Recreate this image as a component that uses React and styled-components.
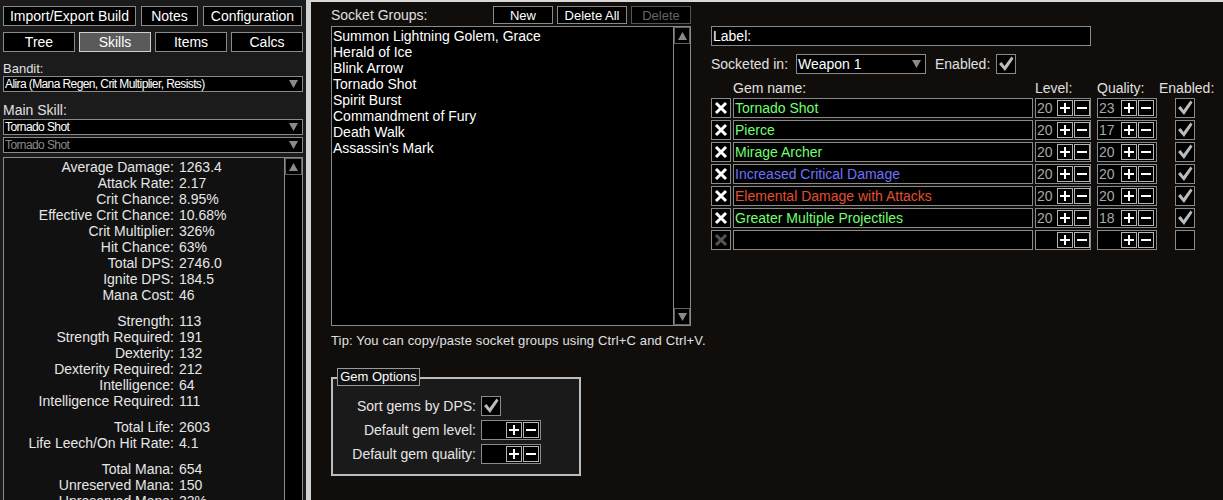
import React from "react";
import styled, { createGlobalStyle } from "styled-components";

const stats = [
  [
    ["Average Damage", "1263.4"],
    ["Attack Rate", "2.17"],
    ["Crit Chance", "8.95%"],
    ["Effective Crit Chance", "10.68%"],
    ["Crit Multiplier", "326%"],
    ["Hit Chance", "63%"],
    ["Total DPS", "2746.0"],
    ["Ignite DPS", "184.5"],
    ["Mana Cost", "46"],
  ],
  [
    ["Strength", "113"],
    ["Strength Required", "191"],
    ["Dexterity", "132"],
    ["Dexterity Required", "212"],
    ["Intelligence", "64"],
    ["Intelligence Required", "111"],
  ],
  [
    ["Total Life", "2603"],
    ["Life Leech/On Hit Rate", "4.1"],
  ],
  [
    ["Total Mana", "654"],
    ["Unreserved Mana", "150"],
    ["Unreserved Mana", "33%"],
  ],
];

const socketGroups = [
  "Summon Lightning Golem, Grace",
  "Herald of Ice",
  "Blink Arrow",
  "Tornado Shot",
  "Spirit Burst",
  "Commandment of Fury",
  "Death Walk",
  "Assassin's Mark",
];

const STR = "#e05030";
const DEX = "#70ff70";
const INT = "#7070ff";

const gems = [
  { name: "Tornado Shot", color: DEX, level: "20", quality: "23" },
  { name: "Pierce", color: DEX, level: "20", quality: "17" },
  { name: "Mirage Archer", color: DEX, level: "20", quality: "20" },
  { name: "Increased Critical Damage", color: INT, level: "20", quality: "20" },
  { name: "Elemental Damage with Attacks", color: STR, level: "20", quality: "20" },
  { name: "Greater Multiple Projectiles", color: DEX, level: "20", quality: "18" },
];

const GlobalStyle = createGlobalStyle`
  html, body {
    margin: 0;
    padding: 0;
    background: #100d0b;
  }
  body {
    font-family: "Liberation Sans", Arial, sans-serif;
    color: #e8e8e8;
  }
  * {
    box-sizing: border-box;
  }
`;

const Page = styled.div`
  display: flex;
  width: 1223px;
  height: 500px;
  overflow: hidden;
`;

const Sidebar = styled.div`
  flex: none;
  width: 306px;
  height: 500px;
  padding: 6px 3px 0 3px;
  background: #1b1b1b;
  display: flex;
  flex-direction: column;
`;

const Divider = styled.div`
  flex: none;
  width: 5px;
  background: #d2d2d2;
`;

const Main = styled.div`
  flex: 1;
  border-top: 2px solid #d8d8d8;
  background: #100d0b;
  padding: 4px 0 0 20px;
  display: flex;
  gap: 20px;
`;

const ButtonRow = styled.div`
  display: flex;
  gap: ${(p) => p.$gap}px;
  margin-top: ${(p) => p.$mt || 0}px;
`;

const Btn = styled.div`
  width: ${(p) => p.$w}px;
  height: ${(p) => p.$h || 20}px;
  border: 1px solid ${(p) => (p.$active ? "#d0d0d0" : p.$disabled ? "#555" : "#8a8a8a")};
  background: ${(p) => (p.$active ? "#5a5a5a" : "#000")};
  color: ${(p) => (p.$disabled ? "#666" : "#fff")};
  font-size: ${(p) => p.$fs || 14}px;
  display: flex;
  align-items: center;
  justify-content: center;
  white-space: nowrap;
`;

const FieldLabel = styled.div`
  margin-top: ${(p) => p.$mt}px;
  height: ${(p) => p.$h}px;
  line-height: ${(p) => p.$h}px;
  font-size: ${(p) => p.$fs}px;
  color: #e0e0e0;
`;

const Select = styled.div`
  width: ${(p) => (p.$w ? `${p.$w}px` : "100%")};
  height: ${(p) => p.$h}px;
  margin-top: ${(p) => p.$mt || 0}px;
  border: 1px solid #8a8a8a;
  background: #000;
  color: ${(p) => (p.$disabled ? "#8a8a8a" : "#fff")};
  font-size: ${(p) => p.$fs}px;
  letter-spacing: ${(p) => p.$ls || 0}px;
  display: flex;
  align-items: center;
  justify-content: space-between;
  padding: 0 4px 0 1px;
  white-space: nowrap;
`;

const StatsBox = styled.div`
  flex: 1;
  min-height: 0;
  margin-top: 4px;
  display: flex;
  border: 1px solid #8a8a8a;
  border-bottom: none;
  background: #111;
  overflow: hidden;
`;

const StatsList = styled.div`
  flex: 1;
  padding-top: 1px;
`;

const StatGroup = styled.div`
  & + & {
    margin-top: 10px;
  }
`;

const StatRow = styled.div`
  display: flex;
  height: 16px;
  line-height: 16px;
  font-size: 14px;
  white-space: nowrap;
`;

const StatLabel = styled.span`
  width: 170px;
  text-align: right;
  color: #e6e6e6;
`;

const StatValue = styled.span`
  margin-left: 5px;
  color: #e6e6e6;
`;

const Scrollbar = styled.div`
  flex: none;
  width: ${(p) => p.$w}px;
  border-left: 1px solid #8a8a8a;
  background: #000;
  display: flex;
  flex-direction: column;
  justify-content: space-between;
`;

const ScrollBtn = styled.div`
  height: 17px;
  border: 1px solid #606060;
  display: flex;
  align-items: center;
  justify-content: center;
`;

const LeftCol = styled.div`
  flex: none;
  width: 360px;
  display: flex;
  flex-direction: column;
`;

const GroupsHeader = styled.div`
  display: flex;
  align-items: center;
  height: 18px;
  font-size: 14px;
  color: #e0e0e0;
`;

const HeaderButtons = styled.div`
  margin-left: auto;
  display: flex;
  gap: 4px;
`;

const ListBox = styled.div`
  margin-top: 2px;
  height: 300px;
  border: 1px solid #8a8a8a;
  background: #000;
  display: flex;
`;

const ListItems = styled.div`
  flex: 1;
  padding: 1px 0 0 1px;
`;

const ListItem = styled.div`
  height: 16px;
  line-height: 16px;
  font-size: 14px;
  color: #fff;
  white-space: nowrap;
`;

const Tip = styled.div`
  margin-top: 7px;
  height: 16px;
  line-height: 16px;
  font-size: 13px;
  letter-spacing: 0.15px;
  color: #e0e0e0;
  white-space: nowrap;
`;

const OptionsBox = styled.div`
  position: relative;
  margin-top: 28px;
  width: 250px;
  height: 99px;
  border: 2px solid #bdbdbd;
  background: #1a1a1a;
  padding-top: 17px;
`;

const OptionsLegend = styled.div`
  position: absolute;
  top: -11px;
  left: 4px;
  width: 83px;
  height: 18px;
  border: 1px solid #9a9a9a;
  background: #111;
  font-size: 13px;
  line-height: 16px;
  text-align: center;
  white-space: nowrap;
  color: #fff;
`;

const OptionsGrid = styled.div`
  display: grid;
  grid-template-columns: 143px auto;
  column-gap: 5px;
  row-gap: 4px;
  align-items: center;
`;

const OptionLabel = styled.div`
  text-align: right;
  font-size: 14px;
  color: #e6e6e6;
  white-space: nowrap;
`;

const RightCol = styled.div`
  flex: 1;
  padding-top: 20px;
  display: flex;
  flex-direction: column;
`;

const TextInput = styled.div`
  width: ${(p) => p.$w}px;
  height: 20px;
  margin-left: ${(p) => p.$ml || 0}px;
  border: 1px solid #8a8a8a;
  background: #000;
  font-size: 14px;
  line-height: 18px;
  padding-left: 1px;
  color: ${(p) => p.$color || "#fff"};
  white-space: nowrap;
  overflow: hidden;
`;

const InlineRow = styled.div`
  display: flex;
  align-items: center;
  height: ${(p) => p.$h || 20}px;
  margin-top: ${(p) => p.$mt || 0}px;
`;

const InlineText = styled.span`
  margin-left: ${(p) => p.$ml || 0}px;
  width: ${(p) => (p.$w ? `${p.$w}px` : "auto")};
  font-size: 14px;
  color: #e0e0e0;
  white-space: nowrap;
  flex: none;
`;

const Box = styled.div`
  flex: none;
  width: 20px;
  height: 20px;
  margin-left: ${(p) => p.$ml || 0}px;
  border: 1px solid #8a8a8a;
  background: #000;
  display: flex;
  align-items: center;
  justify-content: center;
`;

const SpinnerWrap = styled.div`
  flex: none;
  width: ${(p) => p.$w}px;
  height: 20px;
  margin-left: ${(p) => p.$ml || 0}px;
  border: 1px solid #8a8a8a;
  background: #000;
  display: flex;
  align-items: center;
  padding-right: ${(p) => p.$pr || 0}px;
`;

const SpinnerValue = styled.span`
  flex: 1;
  padding-left: 1px;
  font-size: 14px;
  color: #a8a8a8;
`;

const SpinBtn = styled.div`
  width: 16px;
  height: 16px;
  border: 1px solid #b4b4b4;
  background: #000;
  display: flex;
  align-items: center;
  justify-content: center;
  & + & {
    margin-left: 1px;
  }
`;

const DownTri = () => (
  <svg width="9" height="8" viewBox="0 0 9 8">
    <polygon points="0,0 9,0 4.5,8" fill="#8a8a8a" />
  </svg>
);

const UpTri = () => (
  <svg width="9" height="8" viewBox="0 0 9 8">
    <polygon points="0,8 9,8 4.5,0" fill="#8a8a8a" />
  </svg>
);

const Check = () => (
  <svg width="18" height="18" viewBox="0 0 18 18">
    <polygon points="2,9 4.5,7 7.5,11 14.5,1.5 16.5,3.5 8,16" fill="#bcbcbc" />
  </svg>
);

const Cross = ({ disabled }) => (
  <svg width="14" height="14" viewBox="0 0 14 14">
    <path d="M2 2 L12 12 M12 2 L2 12" stroke={disabled ? "#555" : "#fff"} strokeWidth="3" />
  </svg>
);

const Plus = () => (
  <svg width="12" height="12" viewBox="0 0 12 12">
    <path d="M1 6 H11 M6 1 V11" stroke="#fff" strokeWidth="2" />
  </svg>
);

const Minus = () => (
  <svg width="12" height="12" viewBox="0 0 12 12">
    <path d="M1 6 H11" stroke="#fff" strokeWidth="2" />
  </svg>
);

const Spinner = ({ w, ml, pr, value }) => (
  <SpinnerWrap $w={w} $ml={ml} $pr={pr}>
    <SpinnerValue>{value}</SpinnerValue>
    <SpinBtn>
      <Plus />
    </SpinBtn>
    <SpinBtn>
      <Minus />
    </SpinBtn>
  </SpinnerWrap>
);

const CheckBox = ({ checked, ml }) => <Box $ml={ml}>{checked && <Check />}</Box>;

const GemRow = ({ gem }) => (
  <InlineRow $mt={2}>
    <Box>
      <Cross disabled={!gem} />
    </Box>
    <TextInput $w={300} $ml={2} $color={gem && gem.color}>
      {gem && gem.name}
    </TextInput>
    <Spinner w={56} ml={2} pr={0} value={gem && gem.level} />
    <Spinner w={60} ml={6} pr={2} value={gem && gem.quality} />
    <CheckBox ml={18} checked={!!gem} />
  </InlineRow>
);

export default function App() {
  return (
    <>
      <GlobalStyle />
      <Page>
        <Sidebar>
          <ButtonRow $gap={5}>
            <Btn $w={133}>Import/Export Build</Btn>
            <Btn $w={57}>Notes</Btn>
            <Btn $w={99}>Configuration</Btn>
          </ButtonRow>
          <ButtonRow $gap={4} $mt={6}>
            <Btn $w={72}>Tree</Btn>
            <Btn $w={72} $active>
              Skills
            </Btn>
            <Btn $w={72}>Items</Btn>
            <Btn $w={72}>Calcs</Btn>
          </ButtonRow>
          <FieldLabel $mt={10} $h={14} $fs={13}>
            Bandit:
          </FieldLabel>
          <Select $h={16} $fs={12} $ls={-0.6}>
            <span>Alira (Mana Regen, Crit Multiplier, Resists)</span>
            <DownTri />
          </Select>
          <FieldLabel $mt={10} $h={17} $fs={14}>
            Main Skill:
          </FieldLabel>
          <Select $h={16} $fs={12} $ls={-0.6}>
            <span>Tornado Shot</span>
            <DownTri />
          </Select>
          <Select $h={16} $fs={12} $ls={-0.6} $mt={2} $disabled>
            <span>Tornado Shot</span>
            <DownTri />
          </Select>
          <StatsBox>
            <StatsList>
              {stats.map((group, gi) => (
                <StatGroup key={gi}>
                  {group.map(([label, value], i) => (
                    <StatRow key={i}>
                      <StatLabel>{label}:</StatLabel>
                      <StatValue>{value}</StatValue>
                    </StatRow>
                  ))}
                </StatGroup>
              ))}
            </StatsList>
            <Scrollbar $w={18}>
              <ScrollBtn>
                <UpTri />
              </ScrollBtn>
            </Scrollbar>
          </StatsBox>
        </Sidebar>
        <Divider />
        <Main>
          <LeftCol>
            <GroupsHeader>
              <span>Socket Groups:</span>
              <HeaderButtons>
                <Btn $w={60} $h={18} $fs={13}>
                  New
                </Btn>
                <Btn $w={70} $h={18} $fs={13}>
                  Delete All
                </Btn>
                <Btn $w={60} $h={18} $fs={13} $disabled>
                  Delete
                </Btn>
              </HeaderButtons>
            </GroupsHeader>
            <ListBox>
              <ListItems>
                {socketGroups.map((g) => (
                  <ListItem key={g}>{g}</ListItem>
                ))}
              </ListItems>
              <Scrollbar $w={17}>
                <ScrollBtn>
                  <UpTri />
                </ScrollBtn>
                <ScrollBtn>
                  <DownTri />
                </ScrollBtn>
              </Scrollbar>
            </ListBox>
            <Tip>Tip: You can copy/paste socket groups using Ctrl+C and Ctrl+V.</Tip>
            <OptionsBox>
              <OptionsLegend>Gem Options</OptionsLegend>
              <OptionsGrid>
                <OptionLabel>Sort gems by DPS:</OptionLabel>
                <CheckBox checked />
                <OptionLabel>Default gem level:</OptionLabel>
                <Spinner w={60} pr={1} />
                <OptionLabel>Default gem quality:</OptionLabel>
                <Spinner w={60} pr={1} />
              </OptionsGrid>
            </OptionsBox>
          </LeftCol>
          <RightCol>
            <TextInput $w={380}>Label:</TextInput>
            <InlineRow $mt={8}>
              <InlineText $w={85}>Socketed in:</InlineText>
              <Select $w={130} $h={20} $fs={14}>
                <span>Weapon 1</span>
                <DownTri />
              </Select>
              <InlineText $ml={9} $w={61}>
                Enabled:
              </InlineText>
              <CheckBox checked />
            </InlineRow>
            <InlineRow $mt={6} $h={16}>
              <InlineText $ml={22} $w={302}>
                Gem name:
              </InlineText>
              <InlineText $w={62}>Level:</InlineText>
              <InlineText $w={62}>Quality:</InlineText>
              <InlineText>Enabled:</InlineText>
            </InlineRow>
            {gems.map((g) => (
              <GemRow key={g.name} gem={g} />
            ))}
            <GemRow gem={null} />
          </RightCol>
        </Main>
      </Page>
    </>
  );
}
